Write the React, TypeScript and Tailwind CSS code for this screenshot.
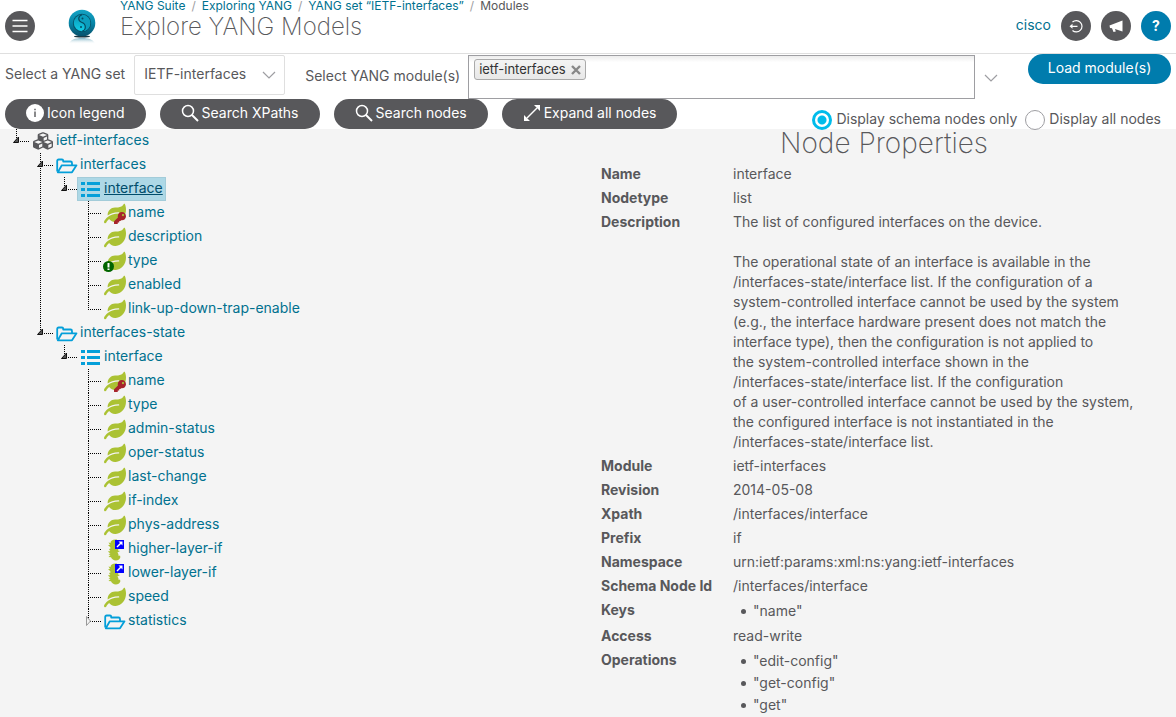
import { useState } from "react";
import type { ReactNode } from "react";
import { FaCubes, FaKey, FaLeaf } from "react-icons/fa";

type Kind = "module" | "folder" | "list" | "leaf" | "key" | "required" | "leafref";

interface TreeNode {
  label: string;
  kind: Kind;
  selected?: boolean;
  collapsed?: boolean;
  children?: TreeNode[];
}

const TREE: TreeNode = {
  label: "ietf-interfaces",
  kind: "module",
  children: [
    {
      label: "interfaces",
      kind: "folder",
      children: [
        {
          label: "interface",
          kind: "list",
          selected: true,
          children: [
            { label: "name", kind: "key" },
            { label: "description", kind: "leaf" },
            { label: "type", kind: "required" },
            { label: "enabled", kind: "leaf" },
            { label: "link-up-down-trap-enable", kind: "leaf" },
          ],
        },
      ],
    },
    {
      label: "interfaces-state",
      kind: "folder",
      children: [
        {
          label: "interface",
          kind: "list",
          children: [
            { label: "name", kind: "key" },
            { label: "type", kind: "leaf" },
            { label: "admin-status", kind: "leaf" },
            { label: "oper-status", kind: "leaf" },
            { label: "last-change", kind: "leaf" },
            { label: "if-index", kind: "leaf" },
            { label: "phys-address", kind: "leaf" },
            { label: "higher-layer-if", kind: "leafref" },
            { label: "lower-layer-if", kind: "leafref" },
            { label: "speed", kind: "leaf" },
            { label: "statistics", kind: "folder", collapsed: true },
          ],
        },
      ],
    },
  ],
};

const DESCRIPTION = `The list of configured interfaces on the device.

The operational state of an interface is available in the
/interfaces-state/interface list. If the configuration of a
system-controlled interface cannot be used by the system
(e.g., the interface hardware present does not match the
interface type), then the configuration is not applied to
the system-controlled interface shown in the
/interfaces-state/interface list. If the configuration
of a user-controlled interface cannot be used by the system,
the configured interface is not instantiated in the
/interfaces-state/interface list.`;

const PROPERTIES: { name: string; value: string | string[] }[] = [
  { name: "Name", value: "interface" },
  { name: "Nodetype", value: "list" },
  { name: "Description", value: DESCRIPTION },
  { name: "Module", value: "ietf-interfaces" },
  { name: "Revision", value: "2014-05-08" },
  { name: "Xpath", value: "/interfaces/interface" },
  { name: "Prefix", value: "if" },
  { name: "Namespace", value: "urn:ietf:params:xml:ns:yang:ietf-interfaces" },
  { name: "Schema Node Id", value: "/interfaces/interface" },
  { name: "Keys", value: ['"name"'] },
  { name: "Access", value: "read-write" },
  { name: "Operations", value: ['"edit-config"', '"get-config"', '"get"'] },
];

function NodeIcon({ kind }: { kind: Kind }) {
  switch (kind) {
    case "module":
      return <FaCubes className="ml-px h-5 w-5 text-[#58585b]" />;
    case "folder":
      return (
        <svg
          className="mt-0.5 h-4 w-[22px]"
          viewBox="0 0 22 16"
          fill="none"
          stroke="#049fd9"
          strokeWidth="1.800"
          strokeLinejoin="round"
        >
          <path d="M1.200 13.500V3Q1.200 1.500 2.700 1.500H6q1.200 0 1.200 1.200v.8h7.300Q16 3.500 16 5v2" />
          <path d="M5.800 7.300H20.500L16 14.300H1.800z" />
        </svg>
      );
    case "list":
      return (
        <svg className="ml-px h-5 w-5 fill-[#049fd9]" viewBox="0 0 20 20">
          <path d="M0 3h4v3H0zM6 3h13v3H6zM0 9h4v3H0zM6 9h13v3H6zM0 15h4v3H0zM6 15h13v3H6z" />
        </svg>
      );
    case "leafref":
      return (
        <svg className="h-6 w-6" viewBox="0 0 24 24">
          <g fill="#abc233">
            <path d="M13 2.500C9 2 6.500 3.500 6.500 6L4.500 5.500 6 8 4 8l2 2 7 2z" />
            <path d="M6 8.500h6c2 1 3 3 2 5l2 .500-2.500 1.500C10 17 6 15 5 12l1.500-.500z" />
            <path d="M6.500 13.500c-1 1-2 1-2.500.500.500 1.500 1.500 2 2.500 2l-2 1.500 2 .500-2 2 2.500.300c1 3 5 4.200 8 2.200 1.500-1 1.500-2.500 1-4l-1.500.500c.5-2-1-4-3-5z" />
          </g>
          <path d="M11 3h9v9h-9z" fill="#00f" />
          <path d="m13 10 4-4" stroke="#fff" strokeWidth="1.500" />
          <path d="M14.500 4.500h4v4z" fill="#fff" />
        </svg>
      );
    default:
      return (
        <span className="relative block">
          <FaLeaf className="h-[21px] w-[22px] text-[#abc233]" />
          {kind === "key" && (
            <FaKey className="absolute right-0 bottom-0 h-3 w-3 text-[#a6242b]" />
          )}
          {kind === "required" && (
            <svg className="absolute bottom-0 -left-px h-[11px] w-[11px]" viewBox="0 0 11 11">
              <circle cx="5.500" cy="5.500" r="5.500" fill="#006400" />
              <path d="M4.500 2h2v4.500h-2zM4.500 7.500h2V9h-2z" fill="#fff" />
            </svg>
          )}
        </span>
      );
  }
}

function Branch({ node, last }: { node: TreeNode; last: boolean }) {
  const expandable = node.children || node.collapsed;
  return (
    <li className="flex">
      <span className="relative flex w-[13px] shrink-0 flex-col">
        <span className="h-[13px] border-b border-l border-dotted border-black" />
        {!last && <span className="flex-1 border-l border-dotted border-black" />}
        {expandable && (
          <svg className="absolute top-1.5 -left-1 h-3 w-3" viewBox="0 0 12 12">
            {node.collapsed ? (
              <path d="M2.500 1.500v9l4-4.500z" fill="#f4f4f4" stroke="#999" />
            ) : (
              <path d="M6.500 2v5.500H1.500z" fill="#555" stroke="#111" />
            )}
          </svg>
        )}
      </span>
      <div>
        <a
          href="#node"
          className={
            node.selected
              ? "flex h-6 w-fit items-center border border-[#a3ccd9] bg-[#add8e6] pr-0.5 pl-0.5 text-[#004d6b]"
              : "flex h-6 w-fit items-center pl-[3px] text-[#00718f]"
          }
        >
          <span className="flex h-6 w-6 items-center">
            <NodeIcon kind={node.kind} />
          </span>
          <span className={node.selected ? "pb-0.5 underline" : "pb-0.5"}>{node.label}</span>
        </a>
        {node.children && (
          <ul className="pl-[11px]">
            {node.children.map((child, i) => (
              <Branch key={child.label} node={child} last={i === node.children!.length - 1} />
            ))}
          </ul>
        )}
      </div>
    </li>
  );
}

function Logo() {
  return (
    <svg className="h-9 w-7" viewBox="0 0 28 36" aria-label="YANG Suite">
      <defs>
        <linearGradient id="ring" x1="0" y1="0" x2="0" y2="1">
          <stop offset="0" stopColor="#14a3c4" />
          <stop offset="0.5" stopColor="#0786a8" />
          <stop offset="1" stopColor="#07506b" />
        </linearGradient>
        <linearGradient id="core" x1="0" y1="0" x2="0" y2="1">
          <stop offset="0" stopColor="#0a93b4" />
          <stop offset="1" stopColor="#12cfe8" />
        </linearGradient>
        <linearGradient id="fade" x1="0" y1="0" x2="0" y2="1">
          <stop offset="0" stopColor="#7fb4c6" />
          <stop offset="1" stopColor="#fff" stopOpacity="0" />
        </linearGradient>
      </defs>
      <path d="M1 35c1-4 6-6 13-6s12 2 13 6z" fill="url(#fade)" />
      <ellipse cx="14" cy="27.500" rx="8" ry="1" fill="#1b3540" />
      <circle cx="14" cy="14" r="13.300" fill="url(#ring)" />
      <circle cx="14" cy="14" r="9.200" fill="#06546b" />
      <circle cx="14" cy="14" r="8.200" fill="url(#core)" />
      <path
        d="M14 5.800c-4.500 1.500-4 6-.500 7.500 5 1.700 5 7.500.500 9 5.500 0 8.300-4 8.200-8.500S18.500 6 14 5.800z"
        fill="#0b9dbd"
      />
      <path
        d="M14 5.800c-4.500 1.500-4 6-.500 7.500 5 1.700 5 7.500.500 9"
        fill="none"
        stroke="#064a60"
        strokeWidth="1.200"
      />
      <circle cx="14.500" cy="9.500" r="1" fill="#064a60" />
      <circle cx="13" cy="18" r="1" fill="#064a60" />
    </svg>
  );
}

function Chevron({ className }: { className: string }) {
  return (
    <svg className={className} viewBox="0 0 14 8" fill="none" stroke="#9e9ea2" strokeWidth="1.200">
      <path d="m1 1 6 6 6-6" />
    </svg>
  );
}

function SearchIcon() {
  return (
    <svg className="h-[18px] w-[18px]" viewBox="0 0 18 18" fill="none" stroke="#fff">
      <circle cx="7" cy="7" r="5.500" strokeWidth="1.500" />
      <path d="m11 11 6 6" strokeWidth="2" />
    </svg>
  );
}

function Pill({ icon, children }: { icon: ReactNode; children: ReactNode }) {
  return (
    <button
      type="button"
      className="flex h-[30px] items-center gap-[3px] rounded-full bg-[#58585b] px-[21px] pb-0.5 text-white"
    >
      {icon}
      {children}
    </button>
  );
}

const CRUMBS = ["YANG Suite", "Exploring YANG", "YANG set “IETF-interfaces”"];

export default function App() {
  const [mode, setMode] = useState("schema");
  const radio =
    "h-5 w-5 appearance-none rounded-full border border-[#9e9ea2] bg-white checked:border-[3px] checked:border-[#00bceb] checked:bg-[radial-gradient(circle,#00bceb_4px,#fff_5px)]";

  return (
    <div className="flex h-screen flex-col overflow-hidden bg-white font-['Inter','Liberation_Sans',sans-serif] text-sm leading-5 text-[#58585b]">
      <header className="flex h-[54px] shrink-0 items-start border-b border-[#dfdfdf] px-[5px]">
        <button
          type="button"
          aria-label="Menu"
          className="mt-[11px] flex h-[30px] w-[30px] items-center justify-center rounded-full bg-[#58585b]"
        >
          <svg className="h-4 w-4" viewBox="0 0 16 16" stroke="#fff" strokeWidth="1.500">
            <path d="M.5 2.500h15M.5 8h15M.5 13.500h15" />
          </svg>
        </button>
        <div className="mt-[9px] ml-[33px]">
          <Logo />
        </div>
        <div className="ml-6">
          <nav className="flex text-xs leading-3">
            {CRUMBS.map((crumb) => (
              <span key={crumb} className="flex">
                <a href="#crumb" className="text-[#00718f]">
                  {crumb}
                </a>
                <span className="px-1.5 text-[#9e9ea2]">/</span>
              </span>
            ))}
            <span>Modules</span>
          </nav>
          <h1 className="text-2xl leading-[30px] font-extralight">Explore YANG Models</h1>
        </div>
        <div className="mt-[11px] ml-auto flex items-center gap-2.5">
          <a href="#user" className="pb-0.5 text-[#00718f]">
            cisco
          </a>
          <button
            type="button"
            aria-label="Log out"
            className="flex h-[30px] w-[30px] items-center justify-center rounded-full bg-[#58585b]"
          >
            <svg className="h-4 w-4" viewBox="0 0 16 16" fill="none" stroke="#fff" strokeWidth="1.200">
              <path d="M4.500 4a5.700 5.700 0 1 1 0 8.500M3 8.300h6.500" />
              <path d="m4.500 5.800-3 2.500 3 2.500z" fill="#fff" stroke="none" />
            </svg>
          </button>
          <button
            type="button"
            aria-label="Announcements"
            className="flex h-[30px] w-[30px] items-center justify-center rounded-full bg-[#58585b]"
          >
            <svg className="h-4 w-4" viewBox="0 0 16 16" fill="#fff">
              <path d="M14.500 2.500v11L7 11l.8 2.500-2.300.5-1.500-3.700-2-.3-.500-2.500z" />
            </svg>
          </button>
          <button
            type="button"
            aria-label="Help"
            className="flex h-[30px] w-[30px] items-center justify-center rounded-full bg-[#007cad] font-bold text-white"
          >
            ?
          </button>
        </div>
      </header>

      <div className="flex h-[45px] shrink-0 items-start px-[5px]">
        <label htmlFor="yangset" className="mt-2.5">
          Select a YANG set
        </label>
        <div className="relative mt-px ml-[9px]">
          <select
            id="yangset"
            className="h-10 w-[151px] appearance-none rounded-[2px] border border-[#dfdfdf] bg-white pb-0.5 pl-[9px]"
          >
            <option>IETF-interfaces</option>
          </select>
          <Chevron className="pointer-events-none absolute top-4 right-[9px] h-2 w-3.5" />
        </div>
        <label htmlFor="modules" className="mt-3 ml-5">
          Select YANG module(s)
        </label>
        <div className="mt-px ml-2 flex h-11 min-w-0 flex-1 items-start border border-[#9e9ea2] bg-[linear-gradient(#eee_1%,#fff_15%)] px-[5px] py-[3px]">
          <span className="flex h-[21px] shrink-0 items-center gap-[5px] rounded-[3px] border border-[#aaa] bg-gradient-to-b from-[#f4f4f4] to-[#e8e8e8] px-1 pb-0.5 text-[13px] text-[#333]">
            ietf-interfaces
            <button type="button" aria-label="Remove ietf-interfaces" className="pt-0.5">
              <svg className="h-2.5 w-2.5" viewBox="0 0 10 10" stroke="#888" strokeWidth="2.400">
                <path d="m1 1 8 8M9 1 1 9" />
              </svg>
            </button>
          </span>
          <input id="modules" className="h-5 min-w-0 flex-1 bg-transparent outline-none" />
        </div>
        <Chevron className="mt-5 ml-[9px] h-2 w-3.5" />
        <button
          type="button"
          className="ml-[30px] h-[30px] w-[143px] shrink-0 rounded-full bg-[#007cad] pb-0.5 text-white"
        >
          Load module(s)
        </button>
      </div>

      <div className="flex h-[30px] shrink-0 items-start gap-3.5 pl-[5px]">
        <Pill
          icon={
            <svg className="h-[18px] w-[18px]" viewBox="0 0 18 18">
              <circle cx="9" cy="9" r="9" fill="#fff" />
              <path d="M8.300 7.500h1.400V13H8.300zM8.300 4.800h1.400v1.500H8.300z" fill="#58585b" />
            </svg>
          }
        >
          Icon legend
        </Pill>
        <Pill icon={<SearchIcon />}>Search XPaths</Pill>
        <Pill icon={<SearchIcon />}>Search nodes</Pill>
        <Pill
          icon={
            <svg className="h-[18px] w-[18px]" viewBox="0 0 18 18" fill="#fff">
              <path d="m4 14 10-10" stroke="#fff" strokeWidth="1.500" />
              <path d="M17 1v6l-6-6zM1 17v-6l6 6z" />
            </svg>
          }
        >
          Expand all nodes
        </Pill>
        <div className="z-10 mt-2.5 mr-[15px] ml-auto flex gap-2">
          <label className="flex items-center gap-1">
            <input
              type="radio"
              name="mode"
              className={radio}
              checked={mode === "schema"}
              onChange={() => setMode("schema")}
            />
            <span className="pb-0.5">Display schema nodes only</span>
          </label>
          <label className="flex items-center gap-1">
            <input
              type="radio"
              name="mode"
              className={radio}
              checked={mode === "all"}
              onChange={() => setMode("all")}
            />
            <span className="pb-0.5">Display all nodes</span>
          </label>
        </div>
      </div>

      <main className="grid min-h-0 flex-1 grid-cols-2 bg-[#f4f4f4]">
        <ul className="pl-4">
          <Branch node={TREE} last />
        </ul>
        <section className="pr-1 pl-2">
          <h2 className="h-[33px] text-center text-[28px] leading-7 font-extralight">
            Node Properties
          </h2>
          <table className="w-full">
            <tbody>
              {PROPERTIES.map(({ name, value }) => (
                <tr key={name} className="align-top">
                  <th
                    scope="row"
                    className="w-[132px] px-[5px] py-0.5 text-left font-bold whitespace-nowrap"
                  >
                    {name}
                  </th>
                  <td className="px-[5px] py-0.5 whitespace-pre-line">
                    {Array.isArray(value) ? (
                      <ul className="pl-2 leading-[22px]">
                        {value.map((item) => (
                          <li
                            key={item}
                            className="flex items-center gap-[7px] before:h-[5px] before:w-[5px] before:rounded-full before:bg-[#58585b]"
                          >
                            {item}
                          </li>
                        ))}
                      </ul>
                    ) : (
                      value
                    )}
                  </td>
                </tr>
              ))}
            </tbody>
          </table>
        </section>
      </main>
    </div>
  );
}
